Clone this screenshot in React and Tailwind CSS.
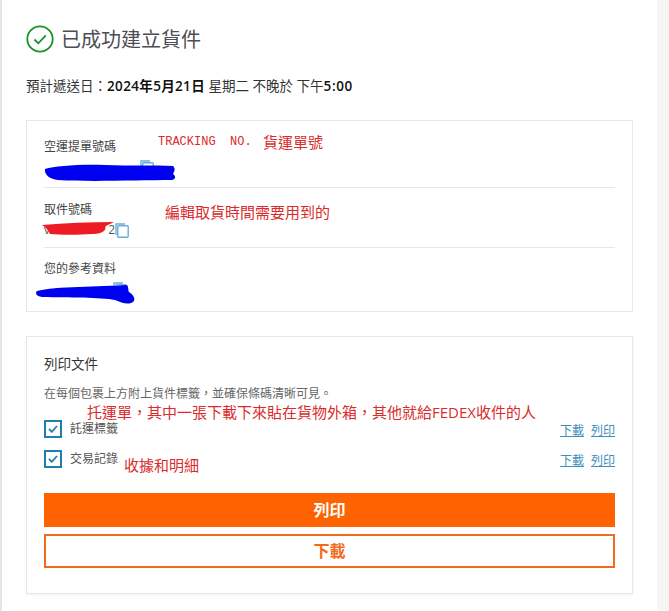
const font = { fontFamily: '"Open Sans", "Noto Sans CJK TC", sans-serif' };

function CopyIcon({ className }) {
  return (
    <svg className={className} width="14" height="15" viewBox="0 0 14 15" fill="none" stroke="#6aaed6" strokeWidth="1.4">
      <path d="M1 12V1H10" />
      <rect x="2.7" y="2.7" width="10.5" height="11.6" rx="1" fill="#fff" />
    </svg>
  );
}

function Field({ label, value, valueClass, rowClass }) {
  return (
    <div className={rowClass}>
      <p className="text-[12px] leading-[16px] text-[#444]">{label}</p>
      <div className="mt-[4px] flex h-[16px] items-center">
        <span className={`flex justify-between text-[12px] text-[#555] ${valueClass}`}>{value}</span>
        <CopyIcon />
      </div>
    </div>
  );
}

function DocRow({ label }) {
  return (
    <div className="flex h-[18px] items-center">
      <span className="flex h-[18px] w-[18px] items-center justify-center border-2 border-[#1f7fae]">
        <svg width="10" height="8" viewBox="0 0 10 8" fill="none" stroke="#1f7fae" strokeWidth="1.8">
          <path d="M1 4l2.8 2.8L9 1" />
        </svg>
      </span>
      <span className="ml-[8px] text-[12px] text-[#555]">{label}</span>
      <a className="ml-auto mt-[4px] text-[12px] text-[#3c8fbc] underline">下載</a>
      <a className="ml-[7px] mt-[4px] text-[12px] text-[#3c8fbc] underline">列印</a>
    </div>
  );
}

export default function App() {
  return (
    <div className="relative h-[611px] w-[669px] overflow-hidden bg-white" style={font}>
      <div className="flex h-full">
        <div className="w-[2px] shrink-0 bg-[#e4e6ea]" />
        <main className="w-[655px] shrink-0 pl-[24px] pr-[24px]">
          <header className="flex h-[78px] items-start pt-[25px]">
            <svg width="28" height="28" viewBox="0 0 28 28" fill="none" stroke="#1a9026" strokeWidth="1.8">
              <circle cx="14" cy="14" r="12.7" />
              <path d="M8.5 14.5l3.8 3.8 7.5-8" />
            </svg>
            <h1 className="ml-[7px] mt-[1px] text-[20px] leading-[28px] text-[#4d4d55]">已成功建立貨件</h1>
          </header>
          <p className="h-[42px] text-[13.5px] leading-[16px] text-[#333]">
            預計遞送日：<span className="font-semibold tracking-[0.35px] text-[#111]">2024年5月21日</span> 星期二 不晚於 下午<span className="font-semibold tracking-[0.6px] text-[#111]">5:00</span>
          </p>

          <section className="h-[192px] border border-[#e8e8e8] px-[17px]">
            <Field label="空運提單號碼" value="" valueClass="w-[96px]" rowClass="h-[67px] border-b border-[#e8e8e8] pt-[18px]" />
            <Field label="取件號碼" value={<><span>v</span><span>2</span></>} valueClass="w-[71px]" rowClass="h-[60px] border-b border-[#e8e8e8] pt-[14px]" />
            <Field label="您的參考資料" value="" valueClass="w-[69px]" rowClass="h-[63px] pt-[13px]" />
          </section>

          <section className="mt-[24px] h-[258px] border border-[#e8e8e8] px-[17px] pt-[18px] shadow-[0_1px_2px_rgba(0,0,0,0.06)]">
            <h2 className="text-[13.5px] leading-[18px] text-[#333]">列印文件</h2>
            <p className="mt-[13px] text-[12px] leading-[16px] text-[#666]">在每個包裹上方附上貨件標籤，並確保條碼清晰可見。</p>
            <div className="mt-[18px] flex flex-col gap-[12px]">
              <DocRow label="託運標籤" />
              <DocRow label="交易記錄" />
            </div>
            <button className="mt-[25px] flex h-[34px] w-full items-center justify-center bg-[#ff6200] text-[16px] font-bold text-white">列印</button>
            <button className="mt-[7px] flex h-[34px] w-full items-center justify-center border-2 border-[#f26a1b] bg-white text-[16px] font-bold text-[#f26a1b]">下載</button>
          </section>
        </main>
        <div className="w-[12px] shrink-0 bg-[#f6f6f6]" />
      </div>

      {/* red notes and scribbles pasted over the screenshot */}
      <span className="absolute left-[158px] top-[133px] whitespace-pre text-[12px] leading-[18px] text-[#d92b2b]" style={{ fontFamily: '"Liberation Mono", monospace' }}>TRACKING  NO.</span>
      <span className="absolute left-[263px] top-[132px] text-[15px] leading-[20px] text-[#d92b2b]">貨運單號</span>
      <span className="absolute left-[165px] top-[202px] whitespace-nowrap text-[15px] leading-[20px] text-[#d92b2b]">編輯取貨時間需要用到的</span>
      <span className="absolute left-[87px] top-[402px] whitespace-nowrap text-[15px] leading-[20px] text-[#d92b2b]">托運單，其中一張下載下來貼在貨物外箱，其他就給FEDEX收件的人</span>
      <span className="absolute left-[124px] top-[455px] whitespace-nowrap text-[15px] leading-[20px] text-[#d92b2b]">收據和明細</span>

      <svg className="absolute left-[30px] top-[155px]" width="155" height="155" viewBox="0 0 155 155" fill="#0000f0">
        <path d="M15 14C25 11 50 9 75 10C100 11 125 10 143 11C146 14 144 17 143 19C146 21 146 24 142 25C110 25 60 27 28 25C20 24 14 20 15 14Z" />
        <path d="M7 136C25 131 70 132 97 130C99 133 98 136 99 137C104 140 106 145 103 147C98 150 92 148 85 145C70 142 40 143 12 142C6 141 5 138 7 136Z" />
      </svg>
      <svg className="absolute left-[40px] top-[220px]" width="75" height="16" viewBox="0 0 75 16" fill="#ed1c24">
        <path d="M2 5C25 3 50 2 74 2L68 5C64 6 66 8 65 10C62 13 58 14 52 14C40 15 20 15 10 14C8 10 6 7 2 5Z" />
      </svg>
    </div>
  );
}
